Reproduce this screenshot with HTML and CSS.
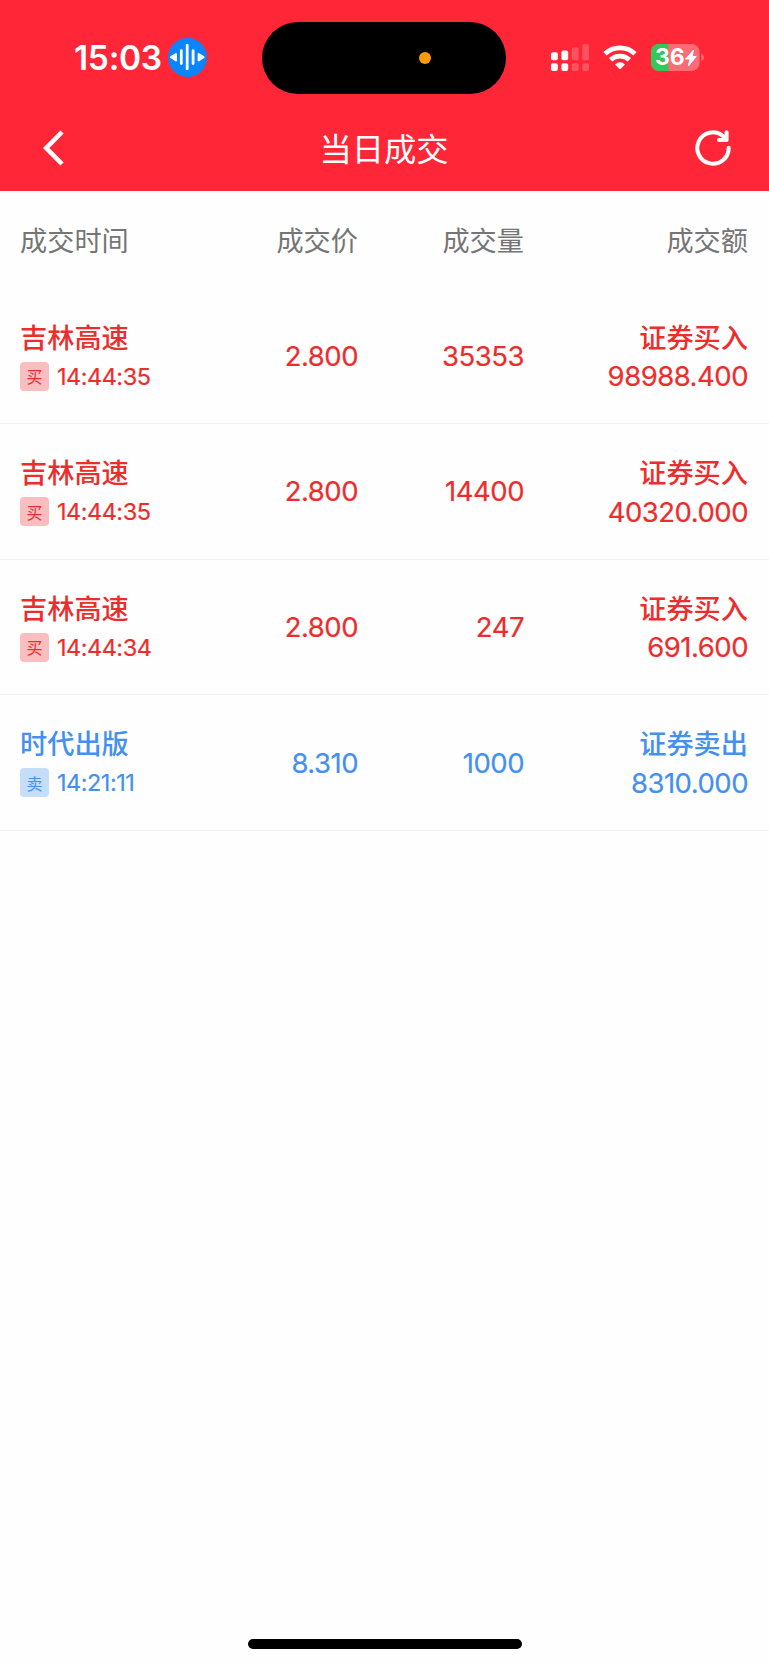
FILE: index.html
```html
<!DOCTYPE html>
<html lang="zh-CN">
<head>
    <meta charset="UTF-8">
    <meta name="viewport" content="width=device-width, initial-scale=1.0">
    <title>当日成交</title>
    <link rel="stylesheet" href="styles.css">
</head>
<body>
    <header class="header">
        <div class="status-bar">
            <div class="status-left">
                <span class="clock">15:03</span>
                <svg class="voice-icon" viewBox="0 0 39 39">
                    <circle cx="19.5" cy="19.5" r="19.5" fill="#0a84ff"/>
                    <g stroke="#fff" stroke-width="2.8" stroke-linecap="round">
                        <path d="M19.2 7.2v23.6M13.3 12.6v13M25.1 12.6v13"/>
                    </g>
                    <path d="M3 19.2l5-3.2v6.4zM35.6 19.2l-5-3.2v6.4z" fill="#fff" stroke="#fff" stroke-width="2" stroke-linejoin="round"/>
                </svg>
            </div>
            <div class="island"><span class="mic-dot"></span></div>
            <div class="status-right">
                <svg class="signal-icon" viewBox="0 0 39 28" fill="#fff">
                    <rect x="0" y="8.2" width="6.8" height="8" rx="2"/>
                    <rect x="10.4" y="6.4" width="6.8" height="9.8" rx="2"/>
                    <rect x="0" y="19.3" width="6.8" height="7.7" rx="2"/>
                    <rect x="10.4" y="19.3" width="6.8" height="7.7" rx="2"/>
                    <g opacity=".2">
                        <rect x="20.8" y="3.2" width="6.8" height="13" rx="2"/>
                        <rect x="31.2" y="0" width="6.8" height="16.2" rx="2"/>
                        <rect x="20.8" y="19.3" width="6.8" height="7.7" rx="2"/>
                        <rect x="31.2" y="19.3" width="6.8" height="7.7" rx="2"/>
                    </g>
                </svg>
                <svg class="wifi-icon" viewBox="0 0 34 25">
                    <path d="M2 8.8A22.2 22.2 0 0 1 32 8.800M7.600 14.800A14 14 0 0 1 26.400 14.800" fill="none" stroke="#fff" stroke-width="4.8"/>
                    <path d="M12 19.400Q17 15 22 19.400L17.700 23.700Q17 24.400 16.300 23.700Z" fill="#fff"/>
                </svg>
                <svg class="battery-icon" viewBox="0 0 54 27">
                    <rect width="48.6" height="27" rx="8" fill="#ff6a76"/>
                    <path d="M8 0H17.4V27H8A8 8 0 0 1 0 19V8A8 8 0 0 1 8 0Z" fill="#34c759"/>
                    <path d="M50.4 9.5Q53 10.5 53 13.2T50.4 17Z" fill="#ff6a76"/>
                    <text class="battery-text" x="4" y="21">36</text>
                    <path d="M42.6 6L34.6 15H39L37.4 22L45.2 12.6H41Z" fill="#fff" stroke="#fff" stroke-linejoin="round"/>
                </svg>
            </div>
        </div>
        <nav class="nav-bar">
            <svg class="back-icon" viewBox="0 0 22 36">
                <path d="M19 2L3.2 18L19 34" fill="none" stroke="#fff" stroke-width="4.6"/>
            </svg>
            <h1 class="title">当日成交</h1>
            <svg class="refresh-icon" viewBox="0 0 36 36" fill="none" stroke="#fff" stroke-width="4" stroke-linecap="round" stroke-linejoin="round">
                <path d="M33.7 17.8A15.7 15.7 0 1 1 27.8 5.8L31 9.2"/>
                <path d="M31.6 2.3V10H24"/>
            </svg>
        </nav>
    </header>

    <main class="deals">
        <div class="deal-head">
            <span>成交时间</span>
            <span>成交价</span>
            <span>成交量</span>
            <span>成交额</span>
        </div>

        <div class="deal buy">
            <div class="stock">
                <div class="name">吉林高速</div>
                <div class="time"><span class="tag">买</span>14:44:35</div>
            </div>
            <div class="num">2.800</div>
            <div class="num">35353</div>
            <div class="amount">
                <div class="name">证券买入</div>
                <div class="num">98988.400</div>
            </div>
        </div>

        <div class="deal buy">
            <div class="stock">
                <div class="name">吉林高速</div>
                <div class="time"><span class="tag">买</span>14:44:35</div>
            </div>
            <div class="num">2.800</div>
            <div class="num">14400</div>
            <div class="amount">
                <div class="name">证券买入</div>
                <div class="num">40320.000</div>
            </div>
        </div>

        <div class="deal buy">
            <div class="stock">
                <div class="name">吉林高速</div>
                <div class="time"><span class="tag">买</span>14:44:34</div>
            </div>
            <div class="num">2.800</div>
            <div class="num">247</div>
            <div class="amount">
                <div class="name">证券买入</div>
                <div class="num">691.600</div>
            </div>
        </div>

        <div class="deal sell">
            <div class="stock">
                <div class="name">时代出版</div>
                <div class="time"><span class="tag">卖</span>14:21:11</div>
            </div>
            <div class="num">8.310</div>
            <div class="num">1000</div>
            <div class="amount">
                <div class="name">证券卖出</div>
                <div class="num">8310.000</div>
            </div>
        </div>
    </main>

    <div class="home-indicator"></div>
</body>
</html>
```

FILE: styles.css
```css
* {
    box-sizing: border-box;
    margin: 0;
    padding: 0;
}

body {
    display: flex;
    flex-direction: column;
    height: 1665px;
    font-family: Inter, 'Noto Sans CJK SC', sans-serif;
    background-color: #fefefe;
    overflow: hidden;
}

svg {
    display: block;
    flex: none;
}

/* header */
.header {
    height: 191px;
    background-color: #ff2737;
    color: #fff;
}

.status-bar {
    display: grid;
    grid-template-columns: 262px 244px 1fr;
    align-items: center;
    height: 94px;
    padding-top: 22px;
}

.status-left {
    display: flex;
    align-items: center;
    height: 72px;
    padding: 0 0 1px 74px;
}

.clock {
    width: 93.5px;
    font-size: 33.5px;
    font-weight: 600;
    line-height: 40px;
    letter-spacing: -0.3px;
}

.voice-icon {
    width: 39px;
    height: 39px;
}

.island {
    display: flex;
    align-items: center;
    height: 72px;
    padding-left: 157px;
    border-radius: 36px;
    background-color: #000;
}

.mic-dot {
    width: 12px;
    height: 12px;
    border-radius: 50%;
    background-color: #ff9a0a;
}

.status-right {
    display: flex;
    align-items: center;
    height: 72px;
    padding: 0 0 1px 45px;
}

.signal-icon {
    width: 39px;
    height: 28px;
}

.wifi-icon {
    width: 34px;
    height: 25px;
    margin-left: 13px;
}

.battery-icon {
    width: 54px;
    height: 27px;
    margin-left: 14px;
}

.battery-text {
    font-size: 23px;
    font-weight: 700;
    fill: #fff;
}

.nav-bar {
    display: flex;
    align-items: center;
    justify-content: space-between;
    height: 97px;
    padding: 11px 38px 0 43px;
}

.back-icon {
    width: 22px;
    height: 36px;
}

.title {
    padding: 3px 0 0 8px;
    font-size: 32.3px;
    font-weight: 400;
    line-height: 40px;
}

.refresh-icon {
    width: 36px;
    height: 36px;
}

/* deal list */
.deals {
    flex: 1;
}

.deal-head,
.deal {
    display: grid;
    grid-template-columns: 169px 169px 166px 1fr;
    align-items: center;
    padding: 0 21px 0 20px;
    text-align: right;
}

.deal-head {
    height: 97.5px;
    padding-bottom: 2px;
    color: #757575;
    font-size: 27.2px;
}

.deal-head span:first-child,
.stock {
    text-align: left;
}

.deal {
    height: 135.6px;
    border-bottom: 1px solid #f1f1f1;
}

.stock,
.amount {
    padding-top: 4px;
}

.name {
    font-size: 27.2px;
    font-weight: 500;
    line-height: 36.5px;
}

.num {
    font-size: 27.5px;
    line-height: 38px;
    letter-spacing: -0.5px;
    -webkit-text-stroke: 0.2px currentColor;
}

.time {
    display: flex;
    align-items: center;
    height: 38px;
    font-size: 23.5px;
    letter-spacing: -0.5px;
    -webkit-text-stroke: 0.2px currentColor;
}

.tag {
    display: flex;
    align-items: center;
    justify-content: center;
    width: 29px;
    height: 29px;
    margin-right: 8px;
    border-radius: 4px;
    font-size: 16px;
    letter-spacing: 0;
    -webkit-text-stroke: 0;
}

.buy {
    color: #ed2d2b;
}

.buy .tag {
    background-color: #f9bfc0;
}

.sell {
    color: #4390ef;
}

.sell .tag {
    background-color: #c6ddf9;
}

.home-indicator {
    width: 274px;
    height: 10px;
    margin: 0 auto 16px;
    border-radius: 5px;
    background-color: #000;
}
```
